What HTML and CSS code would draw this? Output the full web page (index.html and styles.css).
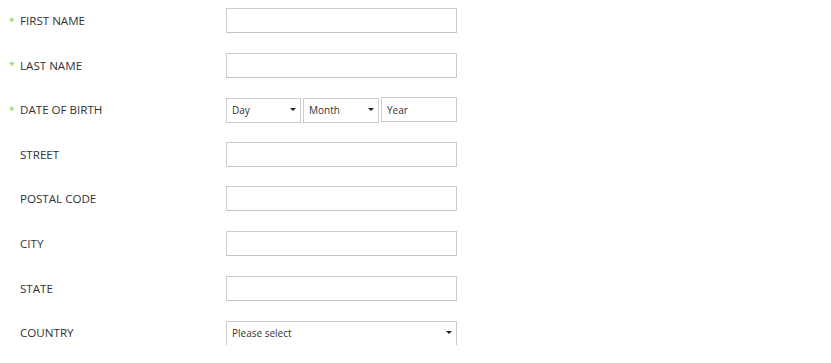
FILE: index.html
```html
<!DOCTYPE html>
<html>
<head>
<meta charset="utf-8">
<link rel="stylesheet" href="styles.css">
</head>
<body>
<form class="form">
  <div class="row">
    <label class="label"><span class="req">*</span>FIRST NAME</label>
    <input class="field" type="text">
  </div>
  <div class="row">
    <label class="label"><span class="req">*</span>LAST NAME</label>
    <input class="field" type="text">
  </div>
  <div class="row">
    <label class="label"><span class="req">*</span>DATE OF BIRTH</label>
    <div class="dob">
      <div class="sel sel-day"><select><option>Day</option></select></div>
      <div class="sel sel-month"><select><option>Month</option></select></div>
      <input class="field year" type="text" placeholder="Year">
    </div>
  </div>
  <div class="row">
    <label class="label"><span class="req"></span>STREET</label>
    <input class="field" type="text">
  </div>
  <div class="row">
    <label class="label"><span class="req"></span>POSTAL CODE</label>
    <input class="field" type="text">
  </div>
  <div class="row">
    <label class="label"><span class="req"></span>CITY</label>
    <input class="field" type="text">
  </div>
  <div class="row">
    <label class="label"><span class="req"></span>STATE</label>
    <input class="field" type="text">
  </div>
  <div class="row">
    <label class="label"><span class="req"></span>COUNTRY</label>
    <div class="sel sel-wide"><select><option>Please select</option></select></div>
  </div>
</form>
</body>
</html>
```
FILE: styles.css
```css
html, body {
  margin: 0;
  padding: 0;
  background: #fff;
}
body {
  padding: 8px 0 0 8px;
  font-family: "Open Sans", "Noto Sans", sans-serif;
  color: #333;
}
.form {
  display: flex;
  flex-direction: column;
  gap: 19.6px;
}
.row {
  display: flex;
  align-items: center;
  height: 25px;
}
.label {
  width: 218px;
  flex: none;
  display: flex;
  align-items: center;
  font-size: 11.6px;
  color: #333;
}
.req {
  width: 12px;
  color: #8cc63f;
  font-size: 10px;
  padding-left: 1px;
  box-sizing: border-box;
}
.field {
  box-sizing: border-box;
  width: 231px;
  height: 25px;
  margin: 0;
  border: 1px solid #ccc;
  border-bottom-color: #c4c4c4;
  border-radius: 0;
  padding: 0 5px;
  font-family: "Open Sans", "Noto Sans", sans-serif;
  font-size: 10px;
  color: #333;
  background: #fff;
  outline: none;
}
.field::placeholder {
  color: #333;
}
.dob {
  display: flex;
  gap: 2px;
  width: 231px;
}
.sel {
  position: relative;
  height: 25px;
}
.sel select {
  appearance: none;
  -webkit-appearance: none;
  box-sizing: border-box;
  width: 100%;
  height: 25px;
  margin: 0;
  border: 1px solid #ccc;
  border-radius: 0;
  padding: 0 5px;
  font-family: "Open Sans", "Noto Sans", sans-serif;
  font-size: 10px;
  color: #333;
  background: #fff;
  outline: none;
}
.sel::after {
  content: "";
  position: absolute;
  right: 5px;
  top: 11px;
  border-left: 3px solid transparent;
  border-right: 3px solid transparent;
  border-top: 3px solid #222;
  pointer-events: none;
}
.sel-day {
  width: 75px;
}
.sel-month {
  width: 76px;
}
.year {
  width: 76px;
}
.sel-wide {
  width: 231px;
}
```
